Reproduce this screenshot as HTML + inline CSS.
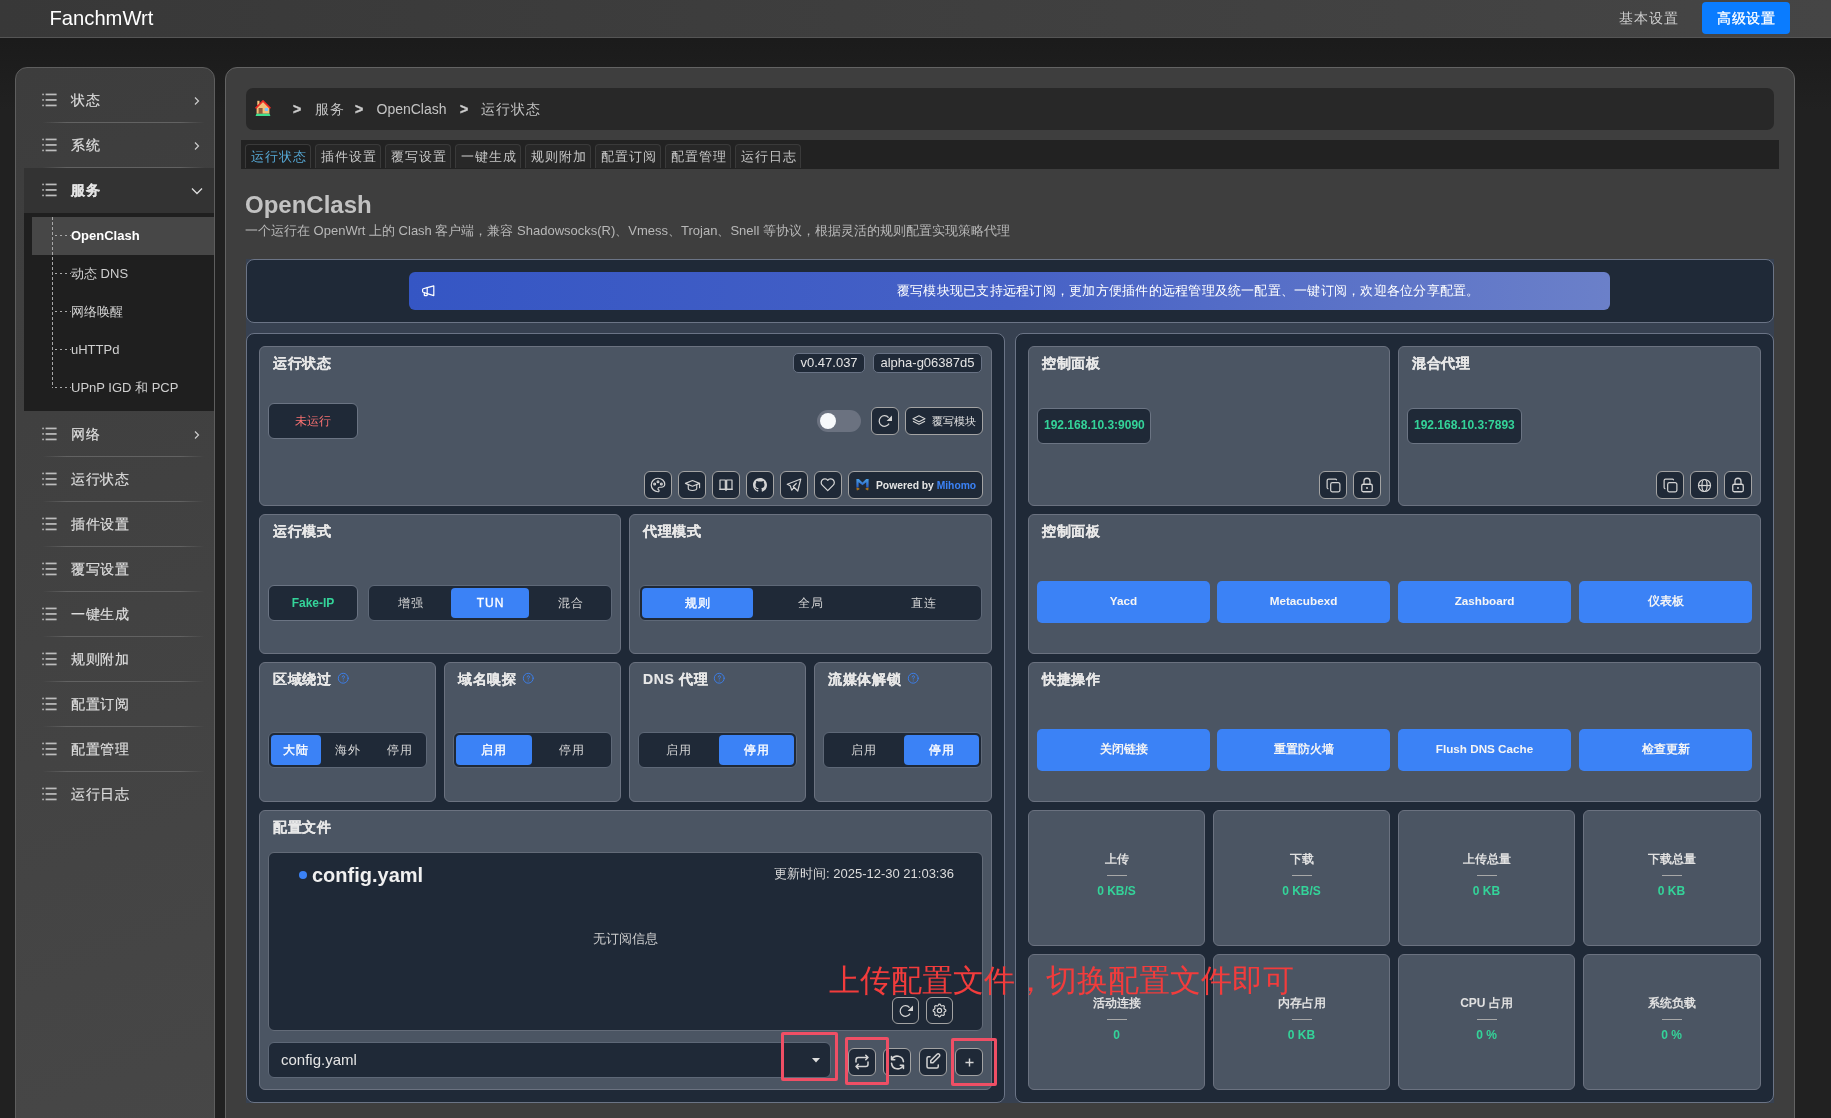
<!DOCTYPE html>
<html><head><meta charset="utf-8"><style>
*{box-sizing:border-box;margin:0;padding:0}
html,body{width:1831px;height:1118px;overflow:hidden}
body{background:linear-gradient(180deg,#1b1b1b 0,#1b1b1b 40px,#212121 110px,#212121 100%);font-family:"Liberation Sans",sans-serif;font-size:13px;color:#ddd;position:relative}
.abs{position:absolute}
svg.sym{position:absolute;width:0;height:0}
#hdr{left:0;top:0;width:1831px;height:38px;background:linear-gradient(90deg,#383838,#454545);border-bottom:1px solid #555}
#logo{left:49.5px;top:6.5px;font-size:20.2px;color:#fff}
#basic{left:1619px;top:10px;font-size:14px;letter-spacing:0.9px;color:#cfcfcf}
#adv{left:1702px;top:2px;width:88px;height:32px;background:#0a7cff;border-radius:4px;color:#fff;font-size:14px;letter-spacing:0.9px;text-indent:0.9px;text-align:center;line-height:32px;-webkit-text-stroke:0.3px #fff}
#side{left:15px;top:67px;width:200px;height:1100px;background:linear-gradient(160deg,#3d3d3d,#474747);border:1px solid #5e5e5e;border-radius:12px 12px 0 0}
#main{left:225px;top:67px;width:1570px;height:1100px;background:#3e3e3e;border:1px solid #636363;border-radius:12px 12px 0 0}
.mi{position:absolute;left:24px;width:190px;height:45px;color:#ddd;font-size:14px;letter-spacing:0.6px}
.mi .lic{position:absolute;left:18px;top:14.5px}
.mi .tx{position:absolute;left:47px;top:0;line-height:45px;-webkit-text-stroke:0.2px #ddd}
.mi .chv{position:absolute;left:169px;top:18px}
.mi.act{background:#333;color:#fff;font-weight:bold}
.mi.act .chv{left:167px;top:19px}
.sep{position:absolute;left:42px;width:163px;height:1px;background:linear-gradient(90deg,rgba(100,100,100,0),#626262 15%,#626262 85%,rgba(100,100,100,0))}
#sub{left:24px;top:213px;width:190px;height:198px;background:#1f1f1f}
#subact{left:32px;top:217px;width:182px;height:38px;background:#474747}
#dash{left:52px;top:217px;width:1px;height:171px;background:repeating-linear-gradient(180deg,#a8a8a8 0 3px,transparent 3px 5px)}
.si{position:absolute;left:71px;font-size:13px;color:#cfcfcf;line-height:20px}
.sh{position:absolute;left:55px;width:16px;height:1px;background:repeating-linear-gradient(90deg,#a8a8a8 0 2px,transparent 2px 5px)}
#bc{left:246px;top:88px;width:1528px;height:42px;background:#282828;border-radius:7px}
#tabs{left:241px;top:140px;width:1538px;height:29px;background:#222}
.tab{position:absolute;top:144px;height:24px;width:66px;border:1px solid #3a3a3a;border-bottom:none;border-radius:4px 4px 0 0;background:#282828;color:#c8c8c8;font-size:13px;letter-spacing:1px;text-indent:1px;text-align:center;line-height:24px}
#wrap{left:246px;top:259px;width:1528px;height:844px;background:#374151}
.pnl{position:absolute;background:#1f2937;border:1px solid #6b7486;border-radius:8px}
.card{position:absolute;background:#4b5563;border:1px solid #6b7280;border-radius:6px}
.bci{position:absolute;font-size:14px;color:#c4c4c4;line-height:20px}
.gt{position:absolute;font-size:14px;color:#cfcfcf;font-weight:bold;line-height:20px;-webkit-text-stroke:0.4px #cfcfcf}
#title{left:245px;top:190px;font-size:24px;font-weight:bold;color:#c2c2c2;line-height:30px}
#desc{left:245px;top:222px;font-size:13px;color:#b8b8b8;line-height:18px;white-space:nowrap}
#ann{left:409px;top:272px;width:1201px;height:38px;border-radius:6px;background:linear-gradient(90deg,#3556c4,#4661c6 50%,#6b80c9)}
#annt{left:897px;top:272px;height:38px;line-height:38px;color:#fff;font-size:13px;letter-spacing:0.24px;white-space:nowrap}
.badge{position:absolute;height:20px;background:#1f2937;border:1px solid #687284;border-radius:5px;font-size:13px;color:#e5e5e5;line-height:18px;padding:0 6.5px;white-space:nowrap}
.box{position:absolute;background:#1f2937;border:1px solid #6b7483;border-radius:6px}
.ib{position:absolute;width:28px;height:28px;background:#1f2937;border:1px solid #a3a3a3;border-radius:6px;color:#d4d4d4}
.ib svg{position:absolute}
.seg{position:absolute;height:36px;background:#1f2937;border:1px solid #5e6877;border-radius:6px}
.sg{position:absolute;top:2px;height:30px;line-height:31px;text-align:center;font-size:12px;letter-spacing:1px;text-indent:1px;color:#d8d8d8;border-radius:4px}
.sg.on{background:#3b82f6;color:#fff;-webkit-text-stroke:0.35px #fff}
.bb{position:absolute;height:42px;background:#3b82f6;border-radius:5px;color:#f5f5f5;font-size:11.7px;font-weight:bold;text-align:center;line-height:40px}
.st{position:absolute;width:177px;text-align:center}
.st .l{position:absolute;left:0;width:100%;top:42px;font-size:12px;font-weight:bold;color:#e0e0e0;line-height:14px}
.st .ln{position:absolute;left:79px;top:65px;width:20px;height:1px;background:#a8a8a8}
.st .v{position:absolute;left:0;width:100%;top:74px;font-size:12px;font-weight:bold;color:#34d399;line-height:14px}
.hp{position:absolute;color:#3b82f6}
.red{position:absolute;border:3px solid #ef4f65;border-radius:2px}
.ct{position:absolute;left:13px;top:8px;font-size:14px;letter-spacing:0.7px;line-height:16px;font-weight:bold;color:#e8e8e8;-webkit-text-stroke:0.15px #e8e8e8}
</style></head><body><div id="root" style="position:absolute;left:0;top:0;width:1831px;height:1118px;will-change:transform">

<svg class="sym"><defs>
<symbol id="lst" viewBox="0 0 16 14"><g fill="#bdbdbd"><rect x="0.2" y="0.4" width="1.7" height="2" rx="0.8"/><rect x="0.2" y="5.9" width="1.7" height="2" rx="0.8"/><rect x="0.2" y="11.4" width="1.7" height="2" rx="0.8"/><rect x="3.6" y="0.6" width="11" height="1.7"/><rect x="3.6" y="6.1" width="11" height="1.7"/><rect x="3.6" y="11.6" width="11" height="1.7"/></g></symbol>
<symbol id="chr" viewBox="0 0 8 10"><path d="M2 1.5 L5.5 5 L2 8.5" fill="none" stroke="#ccc" stroke-width="1.2"/></symbol>
<symbol id="chd" viewBox="0 0 12 8"><path d="M1 1.5 L6 6.5 L11 1.5" fill="none" stroke="#ddd" stroke-width="1.3"/></symbol>
<symbol id="house" viewBox="0 0 16 16"><rect x="2.3" y="0.8" width="2.2" height="4.5" fill="#f7c27c"/><path d="M1.6 7.5 L8 1.3 L14.4 7.5 L14.4 13.8 L1.6 13.8 Z" fill="#f2bf7a"/><path d="M0.6 8.3 L8 1 L15.4 8.3" fill="none" stroke="#ee2a24" stroke-width="1.7"/><rect x="3.6" y="8" width="4" height="6" fill="#8f5a3a"/><rect x="9.8" y="8" width="3.2" height="3" fill="#78c3ff"/><path d="M0.6 16 L1.4 13.8 L14.6 13.8 L15.4 16 Z" fill="#3ee08f"/></symbol>
<symbol id="mega" viewBox="0 0 13 12"><g fill="none" stroke="#fff" stroke-width="1.2" stroke-linejoin="round"><path d="M5.2 2.6 L11.8 0.8 L11.8 10.6 L5.2 8.6 Z"/><path d="M5.2 2.6 L1.3 3.8 Q0.6 4 0.6 4.8 L0.6 6.2 Q0.6 7 1.3 7.3 L5.2 8.6"/><path d="M2.3 7.8 L2.3 10 Q2.3 10.6 2.9 10.6 L4.5 10.6 Q5.2 10.6 5.2 10 L5.2 8.6"/></g></symbol>
<symbol id="i-refresh" viewBox="0 0 16 16"><path d="M12.09 10.65A5.3 5.3 0 1 1 11.56 4.59" fill="none" stroke="currentColor" stroke-width="1.25"/><path d="M15 2.4V8.1H9.6z" fill="currentColor"/></symbol>
<symbol id="i-stack" viewBox="0 0 24 24"><g fill="none" stroke="currentColor" stroke-width="1.6" stroke-linejoin="round"><path d="M12 4l-9 4.5l9 4.5l9-4.5z"/><path d="M3 12.5l9 4.5l9-4.5"/></g></symbol>
<symbol id="i-palette" viewBox="0 0 24 24"><g fill="none" stroke="currentColor" stroke-width="1.6" stroke-linecap="round" stroke-linejoin="round"><path d="M12 21a9 9 0 0 1 0-18c4.97 0 9 3.58 9 8c0 1.06-.47 2.08-1.32 2.83c-.84.75-1.99 1.17-3.18 1.17h-2.5a2 2 0 0 0-1 3.75a1.3 1.3 0 0 1-1 2.25"/><circle cx="7.5" cy="10.5" r="1.2"/><circle cx="12" cy="7.5" r="1.2"/><circle cx="16.5" cy="10.5" r="1.2"/></g></symbol>
<symbol id="i-school" viewBox="0 0 24 24"><g fill="none" stroke="currentColor" stroke-width="1.6" stroke-linecap="round" stroke-linejoin="round"><path d="M22 9l-10-4l-10 4l10 4l10-4v6"/><path d="M6 10.6v5.4a6 3 0 0 0 12 0v-5.4"/></g></symbol>
<symbol id="i-book" viewBox="0 0 24 24"><g fill="none" stroke="currentColor" stroke-width="1.8" stroke-linejoin="round"><path d="M3 4.5h8v14h-8z"/><path d="M13 4.5h8v14h-8z"/><path d="M2 18.5h20M12 18.5v2.5"/></g></symbol>
<symbol id="i-github" viewBox="0 0 16 16"><path fill="currentColor" d="M8 0C3.58 0 0 3.58 0 8c0 3.54 2.29 6.53 5.47 7.59.4.07.55-.17.55-.38 0-.19-.01-.82-.01-1.49-2.01.37-2.53-.49-2.69-.94-.09-.23-.48-.94-.82-1.13-.28-.15-.68-.52-.01-.53.63-.01 1.08.58 1.23.82.72 1.21 1.87.87 2.33.66.07-.52.28-.87.51-1.07-1.78-.2-3.64-.89-3.64-3.95 0-.87.31-1.59.82-2.15-.08-.2-.36-1.02.08-2.12 0 0 .67-.21 2.2.82.64-.18 1.32-.27 2-.27.68 0 1.36.09 2 .27 1.53-1.04 2.2-.82 2.2-.82.44 1.1.16 1.92.08 2.12.51.56.82 1.27.82 2.15 0 3.07-1.87 3.75-3.65 3.95.29.25.54.73.54 1.48 0 1.07-.01 1.93-.01 2.2 0 .21.15.46.55.38A8.013 8.013 0 0 0 16 8c0-4.42-3.58-8-8-8z"/></symbol>
<symbol id="i-send" viewBox="0 0 24 24"><g fill="none" stroke="currentColor" stroke-width="1.6" stroke-linecap="round" stroke-linejoin="round"><path d="M15 10l-4 4l6 6l4-16l-18 7l4 2l2 6l3-4"/></g></symbol>
<symbol id="i-heart" viewBox="0 0 24 24"><path fill="none" stroke="currentColor" stroke-width="1.7" stroke-linecap="round" stroke-linejoin="round" d="M19.5 12.572l-7.5 7.428l-7.5-7.428a5 5 0 1 1 7.5-6.566a5 5 0 1 1 7.5 6.572"/></symbol>
<symbol id="i-mihomo" viewBox="0 0 13 13"><defs><linearGradient id="mg" x1="0" y1="0" x2="0" y2="1"><stop offset="0" stop-color="#4ba0e6"/><stop offset="1" stop-color="#2459c2"/></linearGradient></defs><path fill="url(#mg)" d="M0.4 0.9H2.8L6.5 4.4L10.2 0.9H12.6V9.6H10.2V4.3L6.5 7.3L2.6 4.3V9.6H0.4Z"/><g fill="none" stroke="#a8721c" stroke-width="1.2" stroke-linejoin="round"><path d="M0.5 10.1L2.9 10.9L0.7 11.9"/><path d="M12.5 10.1L10.1 10.9L12.3 11.9"/></g></symbol>
<symbol id="i-copy" viewBox="0 0 24 24"><g fill="none" stroke="currentColor" stroke-width="1.7" stroke-linecap="round" stroke-linejoin="round"><path d="M8 10.5a2.5 2.5 0 0 1 2.5-2.5h8a2.5 2.5 0 0 1 2.5 2.5v8a2.5 2.5 0 0 1-2.5 2.5h-8a2.5 2.5 0 0 1-2.5-2.5z"/><path d="M4.2 16.5a2 2 0 0 1-1.2-1.8v-9.7c0-1.1.9-2 2-2h9.7c.75 0 1.2.4 1.5 1"/></g></symbol>
<symbol id="i-lock" viewBox="0 0 24 24"><g fill="none" stroke="currentColor" stroke-width="1.7" stroke-linecap="round" stroke-linejoin="round"><path d="M5 13a2 2 0 0 1 2-2h10a2 2 0 0 1 2 2v6a2 2 0 0 1-2 2h-10a2 2 0 0 1-2-2z"/><path d="M8 11v-4a4 4 0 1 1 8 0v4"/></g><circle cx="12" cy="16" r="1.3" fill="currentColor"/></symbol>
<symbol id="i-globe" viewBox="0 0 24 24"><g fill="none" stroke="currentColor" stroke-width="1.7"><circle cx="12" cy="12" r="8.5"/><ellipse cx="12" cy="12" rx="3.6" ry="8.5"/><path d="M3.5 12h17"/></g></symbol>
<symbol id="i-help" viewBox="0 0 24 24"><g fill="none" stroke="currentColor" stroke-width="1.7" stroke-linecap="round"><circle cx="12" cy="12" r="9.5"/><path d="M10 9.5a2.2 2.2 0 1 1 3 2c-.6.3-1 .8-1 1.5v.5"/><path d="M12 17.2v.1"/></g></symbol>
<symbol id="i-gear" viewBox="0 0 24 24"><g fill="none" stroke="currentColor" stroke-width="1.7" stroke-linecap="round" stroke-linejoin="round"><path d="M10.325 4.317c.426-1.756 2.924-1.756 3.35 0a1.724 1.724 0 0 0 2.573 1.066c1.543-.94 3.31.826 2.37 2.37a1.724 1.724 0 0 0 1.065 2.572c1.756.426 1.756 2.924 0 3.35a1.724 1.724 0 0 0-1.066 2.573c.94 1.543-.826 3.31-2.37 2.37a1.724 1.724 0 0 0-2.572 1.065c-.426 1.756-2.924 1.756-3.35 0a1.724 1.724 0 0 0-2.573-1.066c-1.543.94-3.31-.826-2.37-2.37a1.724 1.724 0 0 0-1.065-2.572c-1.756-.426-1.756-2.924 0-3.35a1.724 1.724 0 0 0 1.066-2.573c-.94-1.543.826-3.31 2.37-2.37c1 .608 2.296.07 2.572-1.065z"/><circle cx="12" cy="12" r="3"/></g></symbol>
<symbol id="i-repeat" viewBox="0 0 24 24"><g fill="none" stroke="currentColor" stroke-width="2" stroke-linecap="round" stroke-linejoin="round"><path d="M4 12v-3a3 3 0 0 1 3-3h13m-3-3l3 3l-3 3"/><path d="M20 12v3a3 3 0 0 1-3 3h-13m3 3l-3-3l3-3"/></g></symbol>
<symbol id="i-sync" viewBox="0 0 24 24"><g fill="none" stroke="currentColor" stroke-width="2" stroke-linecap="round" stroke-linejoin="round"><path d="M19.5 11a7.8 7.8 0 0 0-14.8-2.5m-.2-4v4h4"/><path d="M4.5 13a7.8 7.8 0 0 0 14.8 2.5m.2 4v-4h-4"/></g></symbol>
<symbol id="i-edit" viewBox="0 0 24 24"><g fill="none" stroke="currentColor" stroke-width="2" stroke-linecap="round" stroke-linejoin="round"><path d="M8 5h-2a2 2 0 0 0-2 2v11a2 2 0 0 0 2 2h11a2 2 0 0 0 2-2v-2"/><path d="M20.385 4.585a2.1 2.1 0 0 0-2.97-2.97l-8.415 8.385v3h3l8.385-8.415z"/></g></symbol>
<symbol id="i-plus" viewBox="0 0 24 24"><path fill="none" stroke="currentColor" stroke-width="2.6" d="M12 4.5v15M4.5 12h15"/></symbol>
</defs></svg>

<div id="hdr" class="abs"></div>
<div id="logo" class="abs">FanchmWrt</div>
<div id="basic" class="abs">基本设置</div>
<div id="adv" class="abs">高级设置</div>
<div id="side" class="abs"></div>
<div id="sub" class="abs"></div><div id="subact" class="abs"></div>
<div class="mi" style="top:78px"><svg class="lic" width="16" height="14"><use href="#lst"/></svg><span class="tx">状态</span><svg class="chv" width="8" height="10"><use href="#chr"/></svg></div>
<div class="mi" style="top:123px"><svg class="lic" width="16" height="14"><use href="#lst"/></svg><span class="tx">系统</span><svg class="chv" width="8" height="10"><use href="#chr"/></svg></div>
<div class="mi act" style="top:168px"><svg class="lic" width="16" height="14"><use href="#lst"/></svg><span class="tx">服务</span><svg class="chv" width="12" height="8"><use href="#chd"/></svg></div>
<div class="mi" style="top:412px"><svg class="lic" width="16" height="14"><use href="#lst"/></svg><span class="tx">网络</span><svg class="chv" width="8" height="10"><use href="#chr"/></svg></div>
<div class="mi" style="top:457px"><svg class="lic" width="16" height="14"><use href="#lst"/></svg><span class="tx">运行状态</span></div>
<div class="mi" style="top:502px"><svg class="lic" width="16" height="14"><use href="#lst"/></svg><span class="tx">插件设置</span></div>
<div class="mi" style="top:547px"><svg class="lic" width="16" height="14"><use href="#lst"/></svg><span class="tx">覆写设置</span></div>
<div class="mi" style="top:592px"><svg class="lic" width="16" height="14"><use href="#lst"/></svg><span class="tx">一键生成</span></div>
<div class="mi" style="top:637px"><svg class="lic" width="16" height="14"><use href="#lst"/></svg><span class="tx">规则附加</span></div>
<div class="mi" style="top:682px"><svg class="lic" width="16" height="14"><use href="#lst"/></svg><span class="tx">配置订阅</span></div>
<div class="mi" style="top:727px"><svg class="lic" width="16" height="14"><use href="#lst"/></svg><span class="tx">配置管理</span></div>
<div class="mi" style="top:772px"><svg class="lic" width="16" height="14"><use href="#lst"/></svg><span class="tx">运行日志</span></div>
<div class="sep" style="top:122px"></div>
<div class="sep" style="top:167px"></div>
<div class="sep" style="top:456px"></div>
<div class="sep" style="top:501px"></div>
<div class="sep" style="top:546px"></div>
<div class="sep" style="top:591px"></div>
<div class="sep" style="top:636px"></div>
<div class="sep" style="top:681px"></div>
<div class="sep" style="top:726px"></div>
<div class="sep" style="top:771px"></div>
<div id="dash" class="abs"></div>
<div class="sh" style="top:235px"></div><div class="si" style="top:226px;color:#fff;font-weight:bold">OpenClash</div>
<div class="sh" style="top:273px"></div><div class="si" style="top:264px;">动态 DNS</div>
<div class="sh" style="top:311px"></div><div class="si" style="top:302px;">网络唤醒</div>
<div class="sh" style="top:349px"></div><div class="si" style="top:340px;">uHTTPd</div>
<div class="sh" style="top:387px"></div><div class="si" style="top:378px;">UPnP IGD 和 PCP</div>
<div id="main" class="abs"></div>
<div id="bc" class="abs"></div>
<svg class="abs" style="left:255px;top:100px" width="16" height="16"><use href="#house"/></svg>
<div class="gt" style="left:293px;top:99px">&gt;</div><div class="bci" style="left:314.5px;top:99px;letter-spacing:1px">服务</div>
<div class="gt" style="left:355px;top:99px">&gt;</div><div class="bci" style="left:376.5px;top:99px">OpenClash</div>
<div class="gt" style="left:460px;top:99px">&gt;</div><div class="bci" style="left:480.5px;top:99px;letter-spacing:1px">运行状态</div>
<div id="tabs" class="abs"></div>
<div class="tab" style="left:245px;color:#56a9d6;background:#1f1f1f">运行状态</div>
<div class="tab" style="left:315px">插件设置</div>
<div class="tab" style="left:385px">覆写设置</div>
<div class="tab" style="left:455px">一键生成</div>
<div class="tab" style="left:525px">规则附加</div>
<div class="tab" style="left:595px">配置订阅</div>
<div class="tab" style="left:665px">配置管理</div>
<div class="tab" style="left:735px">运行日志</div>
<div id="title" class="abs">OpenClash</div>
<div id="desc" class="abs">一个运行在 OpenWrt 上的 Clash 客户端，兼容 Shadowsocks(R)、Vmess、Trojan、Snell 等协议，根据灵活的规则配置实现策略代理</div>
<div id="wrap" class="abs"></div>
<div class="pnl" style="left:246px;top:259px;width:1528px;height:64px"></div>
<div id="ann" class="abs"></div><div id="annt" class="abs">覆写模块现已支持远程订阅，更加方便插件的远程管理及统一配置、一键订阅，欢迎各位分享配置。</div>
<svg class="abs" style="left:422px;top:285px" width="13" height="12"><use href="#mega"/></svg>
<div class="pnl" style="left:246px;top:333px;width:759px;height:770px"></div>
<div class="pnl" style="left:1015px;top:333px;width:759px;height:770px"></div>
<div class="card" style="left:259px;top:346px;width:733px;height:160px"><div class="ct">运行状态</div></div>
<div class="card" style="left:259px;top:514px;width:362px;height:140px"><div class="ct">运行模式</div></div>
<div class="card" style="left:629px;top:514px;width:363px;height:140px"><div class="ct">代理模式</div></div>
<div class="card" style="left:259px;top:662px;width:177px;height:140px"><div class="ct">区域绕过</div></div>
<div class="card" style="left:444px;top:662px;width:177px;height:140px"><div class="ct">域名嗅探</div></div>
<div class="card" style="left:629px;top:662px;width:177px;height:140px"><div class="ct">DNS 代理</div></div>
<div class="card" style="left:814px;top:662px;width:178px;height:140px"><div class="ct">流媒体解锁</div></div>
<div class="card" style="left:259px;top:810px;width:733px;height:280px"><div class="ct">配置文件</div></div>
<div class="card" style="left:1028px;top:346px;width:362px;height:160px"><div class="ct">控制面板</div></div>
<div class="card" style="left:1398px;top:346px;width:363px;height:160px"><div class="ct">混合代理</div></div>
<div class="card" style="left:1028px;top:514px;width:733px;height:140px"><div class="ct">控制面板</div></div>
<div class="card" style="left:1028px;top:662px;width:733px;height:140px"><div class="ct">快捷操作</div></div>
<div class="card" style="left:1028px;top:810px;width:177px;height:136px"></div>
<div class="card" style="left:1213px;top:810px;width:177px;height:136px"></div>
<div class="card" style="left:1398px;top:810px;width:177px;height:136px"></div>
<div class="card" style="left:1583px;top:810px;width:178px;height:136px"></div>
<div class="card" style="left:1028px;top:954px;width:177px;height:136px"></div>
<div class="card" style="left:1213px;top:954px;width:177px;height:136px"></div>
<div class="card" style="left:1398px;top:954px;width:177px;height:136px"></div>
<div class="card" style="left:1583px;top:954px;width:178px;height:136px"></div>
<div class="badge" style="left:793px;top:353px">v0.47.037</div>
<div class="badge" style="left:873px;top:353px">alpha-g06387d5</div>
<div class="box" style="left:268px;top:403px;width:90px;height:36px;text-align:center;line-height:34px;color:#f87171;font-size:12px">未运行</div>
<div class="abs" style="left:817px;top:410px;width:44px;height:22px;border-radius:11px;background:#6b7280"></div><div class="abs" style="left:820px;top:413px;width:16px;height:16px;border-radius:8px;background:#f8fafc"></div>
<div class="ib" style="left:871px;top:407px;width:28px;height:28px"><svg style="left:5.0px;top:5.0px" width="16" height="16"><use href="#i-refresh"/></svg></div>
<div class="ib" style="left:905px;top:407px;width:78px;height:28px"><svg style="left:5px;top:5px" width="16" height="16"><use href="#i-stack"/></svg><span style="position:absolute;left:26px;top:0;line-height:26px;font-size:11px;color:#e0e0e0">覆写模块</span></div>
<div class="ib" style="left:644px;top:471px;width:28px;height:28px"><svg style="left:4.0px;top:4.0px" width="18" height="18"><use href="#i-palette"/></svg></div>
<div class="ib" style="left:678px;top:471px;width:28px;height:28px"><svg style="left:4.5px;top:4.5px" width="17" height="17"><use href="#i-school"/></svg></div>
<div class="ib" style="left:712px;top:471px;width:28px;height:28px"><svg style="left:5.0px;top:5.0px" width="16" height="16"><use href="#i-book"/></svg></div>
<div class="ib" style="left:746px;top:471px;width:28px;height:28px"><svg style="left:6.0px;top:6.0px" width="14" height="14"><use href="#i-github"/></svg></div>
<div class="ib" style="left:780px;top:471px;width:28px;height:28px"><svg style="left:4.0px;top:4.0px" width="18" height="18"><use href="#i-send"/></svg></div>
<div class="ib" style="left:814px;top:471px;width:28px;height:28px"><svg style="left:4.25px;top:4.25px" width="17.5" height="17.5"><use href="#i-heart"/></svg></div>
<div class="ib" style="left:848px;top:471px;width:135px;height:28px"><svg style="left:7px;top:6px" width="13" height="13"><use href="#i-mihomo"/></svg><span style="position:absolute;left:27px;top:1.2px;line-height:26px;font-size:10.3px;font-weight:bold;color:#e5e5e5;white-space:nowrap">Powered by <span style="color:#3b82f6">Mihomo</span></span></div>
<div class="box" style="left:268px;top:585px;width:90px;height:36px;text-align:center;line-height:34px;color:#34d399;font-size:12px;font-weight:bold">Fake-IP</div>
<div class="seg" style="left:368px;top:585px;width:244px"><div class="sg" style="left:2.00px;width:78.00px">增强</div><div class="sg on" style="left:82.00px;width:78.00px">TUN</div><div class="sg" style="left:162.00px;width:78.00px">混合</div></div>
<div class="seg" style="left:639px;top:585px;width:343px"><div class="sg on" style="left:2.00px;width:111.00px">规则</div><div class="sg" style="left:115.00px;width:111.00px">全局</div><div class="sg" style="left:228.00px;width:111.00px">直连</div></div>
<div class="seg" style="left:268px;top:732px;width:159px"><div class="sg on" style="left:2.00px;width:49.67px">大陆</div><div class="sg" style="left:53.67px;width:49.67px">海外</div><div class="sg" style="left:105.33px;width:49.67px">停用</div></div>
<div class="seg" style="left:453px;top:732px;width:159px"><div class="sg on" style="left:2.00px;width:75.50px">启用</div><div class="sg" style="left:79.50px;width:75.50px">停用</div></div>
<div class="seg" style="left:638px;top:732px;width:159px"><div class="sg" style="left:2.00px;width:75.50px">启用</div><div class="sg on" style="left:79.50px;width:75.50px">停用</div></div>
<div class="seg" style="left:823px;top:732px;width:159px"><div class="sg" style="left:2.00px;width:75.50px">启用</div><div class="sg on" style="left:79.50px;width:75.50px">停用</div></div>
<svg class="hp" style="left:336.5px;top:671.5px" width="12.5" height="12.5"><use href="#i-help"/></svg>
<svg class="hp" style="left:521.5px;top:671.5px" width="12.5" height="12.5"><use href="#i-help"/></svg>
<svg class="hp" style="left:712.5px;top:671.5px" width="12.5" height="12.5"><use href="#i-help"/></svg>
<svg class="hp" style="left:906.5px;top:671.5px" width="12.5" height="12.5"><use href="#i-help"/></svg>
<div class="box" style="left:268px;top:852px;width:715px;height:179px;border-color:#636b78"></div>
<div class="abs" style="left:299px;top:871px;width:8px;height:8px;border-radius:4px;background:#3b82f6"></div>
<div class="abs" style="left:312px;top:863px;font-size:20px;font-weight:bold;color:#f0f0f0;line-height:24px">config.yaml</div>
<div class="abs" style="left:774px;top:866px;font-size:13px;color:#dcdcdc;line-height:16px;white-space:nowrap">更新时间: 2025-12-30 21:03:36</div>
<div class="abs" style="left:268px;top:931px;width:715px;text-align:center;font-size:13px;color:#d0d0d0;line-height:16px">无订阅信息</div>
<div class="ib" style="left:892px;top:997px;width:27px;height:27px"><svg style="left:4.5px;top:4.5px" width="16" height="16"><use href="#i-refresh"/></svg></div>
<div class="ib" style="left:926px;top:997px;width:27px;height:27px"><svg style="left:4.0px;top:4.0px" width="17" height="17"><use href="#i-gear"/></svg></div>
<div class="box" style="left:268px;top:1042px;width:563px;height:36px;border-color:#5e6877"><span style="position:absolute;left:12px;top:0;line-height:34px;font-size:15px;color:#e5e5e5">config.yaml</span><svg style="position:absolute;left:543px;top:15px" width="8" height="5"><path d="M0 0h8l-4 4.5z" fill="#ddd"/></svg></div>
<div class="ib" style="left:848px;top:1048px;width:28px;height:28px"><svg style="left:4.0px;top:4.0px" width="18" height="18"><use href="#i-repeat"/></svg></div>
<div class="ib" style="left:883px;top:1048px;width:28px;height:28px"><svg style="left:3.5px;top:3.5px" width="19" height="19"><use href="#i-sync"/></svg></div>
<div class="ib" style="left:919px;top:1048px;width:28px;height:28px"><svg style="left:4.0px;top:4.0px" width="18" height="18"><use href="#i-edit"/></svg></div>
<div class="ib" style="left:955px;top:1048px;width:28px;height:28px"><svg style="left:6.5px;top:6.5px" width="13" height="13"><use href="#i-plus"/></svg></div>
<div class="box" style="left:1037px;top:408px;width:114px;height:36px;color:#34d399;font-size:12px;font-weight:bold;padding:0 0 0 6px;line-height:32px">192.168.10.3:9090</div>
<div class="box" style="left:1407px;top:408px;width:115px;height:36px;color:#34d399;font-size:12px;font-weight:bold;padding:0 0 0 6px;line-height:32px">192.168.10.3:7893</div>
<div class="ib" style="left:1319px;top:471px;width:28px;height:28px"><svg style="left:4.5px;top:4.5px" width="17" height="17"><use href="#i-copy"/></svg></div>
<div class="ib" style="left:1353px;top:471px;width:28px;height:28px"><svg style="left:4.0px;top:4.0px" width="18" height="18"><use href="#i-lock"/></svg></div>
<div class="ib" style="left:1656px;top:471px;width:28px;height:28px"><svg style="left:4.5px;top:4.5px" width="17" height="17"><use href="#i-copy"/></svg></div>
<div class="ib" style="left:1690px;top:471px;width:28px;height:28px"><svg style="left:4.5px;top:4.5px" width="17" height="17"><use href="#i-globe"/></svg></div>
<div class="ib" style="left:1724px;top:471px;width:28px;height:28px"><svg style="left:4.0px;top:4.0px" width="18" height="18"><use href="#i-lock"/></svg></div>
<div class="bb" style="left:1037px;top:581px;width:173px">Yacd</div>
<div class="bb" style="left:1217px;top:581px;width:173px">Metacubexd</div>
<div class="bb" style="left:1398px;top:581px;width:173px">Zashboard</div>
<div class="bb" style="left:1579px;top:581px;width:173px">仪表板</div>
<div class="bb" style="left:1037px;top:729px;width:173px">关闭链接</div>
<div class="bb" style="left:1217px;top:729px;width:173px">重置防火墙</div>
<div class="bb" style="left:1398px;top:729px;width:173px">Flush DNS Cache</div>
<div class="bb" style="left:1579px;top:729px;width:173px">检查更新</div>
<div class="st" style="left:1028px;top:810px;height:136px"><div class="l">上传</div><div class="ln"></div><div class="v">0 KB/S</div></div>
<div class="st" style="left:1213px;top:810px;height:136px"><div class="l">下载</div><div class="ln"></div><div class="v">0 KB/S</div></div>
<div class="st" style="left:1398px;top:810px;height:136px"><div class="l">上传总量</div><div class="ln"></div><div class="v">0 KB</div></div>
<div class="st" style="left:1583px;top:810px;height:136px"><div class="l">下载总量</div><div class="ln"></div><div class="v">0 KB</div></div>
<div class="st" style="left:1028px;top:954px;height:136px"><div class="l">活动连接</div><div class="ln"></div><div class="v">0</div></div>
<div class="st" style="left:1213px;top:954px;height:136px"><div class="l">内存占用</div><div class="ln"></div><div class="v">0 KB</div></div>
<div class="st" style="left:1398px;top:954px;height:136px"><div class="l">CPU 占用</div><div class="ln"></div><div class="v">0 %</div></div>
<div class="st" style="left:1583px;top:954px;height:136px"><div class="l">系统负载</div><div class="ln"></div><div class="v">0 %</div></div>
<div class="abs" style="left:829px;top:962.5px;font-size:31.2px;color:#f23c3c;line-height:36px;white-space:nowrap">上传配置文件，切换配置文件即可</div>
<div class="red" style="left:781px;top:1032px;width:57px;height:49px"></div>
<div class="red" style="left:845px;top:1037px;width:44px;height:48px"></div>
<div class="red" style="left:951px;top:1038px;width:46px;height:48px"></div>
</div></body></html>
